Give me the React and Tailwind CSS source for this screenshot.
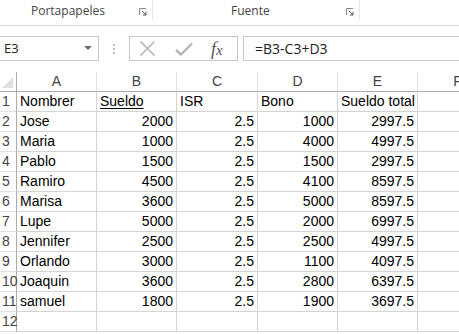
import React from "react";

const cols = ["A", "B", "C", "D", "E", "F"];

// data rows: name, sueldo, isr, bono, total
const rows = [
  ["Nombrer", "Sueldo", "ISR", "Bono", "Sueldo total"],
  ["Jose", "2000", "2.5", "1000", "2997.5"],
  ["Maria", "1000", "2.5", "4000", "4997.5"],
  ["Pablo", "1500", "2.5", "1500", "2997.5"],
  ["Ramiro", "4500", "2.5", "4100", "8597.5"],
  ["Marisa", "3600", "2.5", "5000", "8597.5"],
  ["Lupe", "5000", "2.5", "2000", "6997.5"],
  ["Jennifer", "2500", "2.5", "2500", "4997.5"],
  ["Orlando", "3000", "2.5", "1100", "4097.5"],
  ["Joaquin", "3600", "2.5", "2800", "6397.5"],
  ["samuel", "1800", "2.5", "1900", "3697.5"],
  ["", "", "", "", ""],
];

const Launcher = () => (
  <svg width="8" height="8" viewBox="0 0 8 8" className="mb-[1px]">
    <path d="M0.5 7V0.5H7" fill="none" stroke="#8a8a8a" strokeWidth="1" />
    <path d="M3 3L7 7M7 4V7H4" fill="none" stroke="#555" strokeWidth="1" />
  </svg>
);

const Ribbon = () => (
  <div className="flex h-[26px] border-b border-[#d5d5d5] text-[12px] text-[#444]" style={{ fontFamily: "'Open Sans', 'DejaVu Sans', sans-serif" }}>
    <div className="flex w-[153px] items-end justify-between border-r border-[#e6e6e6] pb-[3px] pl-[31px] pr-[5px] mb-[5px]">
      <span className="leading-none">Portapapeles</span>
      <Launcher />
    </div>
    <div className="flex w-[207px] items-end justify-between border-r border-[#e6e6e6] pb-[3px] pl-[78px] pr-[5px] mb-[5px]">
      <span className="leading-none">Fuente</span>
      <Launcher />
    </div>
  </div>
);

const FormulaBar = () => (
  <div className="flex h-[46px] items-start pt-[10px]" style={{ fontFamily: "'Open Sans', 'DejaVu Sans', sans-serif" }}>
    <div className="flex h-[25px] w-[99px] items-center justify-between border border-l-0 border-[#c6c6c6] pl-[4px] pr-[6px] text-[13px] text-[#222]">
      <span>E3</span>
      <svg width="8" height="5" viewBox="0 0 8 5">
        <path d="M0 0H8L4 4Z" fill="#6d6d6d" />
      </svg>
    </div>
    <div className="flex w-[30px] h-[25px] flex-col items-center justify-center gap-[2px]">
      <span className="h-[2px] w-[2px] bg-[#bcbcbc]" />
      <span className="h-[2px] w-[2px] bg-[#bcbcbc]" />
      <span className="h-[2px] w-[2px] bg-[#bcbcbc]" />
    </div>
    <div className="flex h-[25px] w-[109px] items-center border border-[#c6c6c6] pl-[9px]">
      <svg width="17" height="17" viewBox="0 0 17 17">
        <path d="M1.5 1.5L15.5 15.5M15.5 1.5L1.5 15.5" stroke="#b5b5b5" strokeWidth="1.6" />
      </svg>
      <svg width="18" height="14" viewBox="0 0 18 14" className="ml-[19px]">
        <path d="M1 8L6 12.5L17 1.5" fill="none" stroke="#b5b5b5" strokeWidth="2.4" />
      </svg>
      <span className="ml-[18px] text-[18px] italic leading-none text-[#555]" style={{ fontFamily: "'Liberation Serif', serif" }}>
        <span>f</span><span className="text-[15px]">x</span>
      </span>
    </div>
    <div className="ml-[5px] flex h-[25px] flex-1 items-center border border-r-0 border-[#c6c6c6] pl-[11px] text-[14px] text-[#222]">
      =B3-C3+D3
    </div>
  </div>
);

const Grid = () => (
  <div
    className="grid grid-cols-[17px_80px_80px_81px_80px_80px_80px] auto-rows-[20px] text-[14px] text-black"
    style={{ fontFamily: "'Liberation Sans', Arial, sans-serif" }}
  >
    {/* corner */}
    <div className="relative border-r border-b border-[#ababab] bg-white">
      <svg width="11" height="11" viewBox="0 0 11 11" className="absolute bottom-[3px] right-[3px]">
        <path d="M11 0V11H0Z" fill="#dfdfdf" />
      </svg>
    </div>
    {cols.map((c) => (
      <div
        key={c}
        className="flex items-center justify-center border-r border-b border-r-[#e1e1e1] border-b-[#ababab] text-[14px] text-[#444]"
      >
        {c}
      </div>
    ))}
    {rows.map((r, i) => (
      <React.Fragment key={i}>
        <div className="flex items-center border-r border-b border-r-[#ababab] border-b-[#e1e1e1] pl-[2px] text-[14px] text-[#444]">
          {i + 1}
        </div>
        {r.map((v, j) => {
          const numeric = /^[0-9.]+$/.test(v);
          return (
            <div
              key={j}
              className={`flex items-center overflow-hidden whitespace-nowrap border-r border-b border-[#d4d4d4] px-[3px] ${numeric ? "justify-end" : "justify-start"}`}
            >
              {i === 0 && j === 1 ? <span className="underline underline-offset-2">{v}</span> : v}
            </div>
          );
        })}
        <div className="border-b border-[#d4d4d4]" />
      </React.Fragment>
    ))}
  </div>
);

export default function App() {
  return (
    <div className="h-[334px] w-[459px] overflow-hidden bg-white">
      <Ribbon />
      <FormulaBar />
      <Grid />
    </div>
  );
}
